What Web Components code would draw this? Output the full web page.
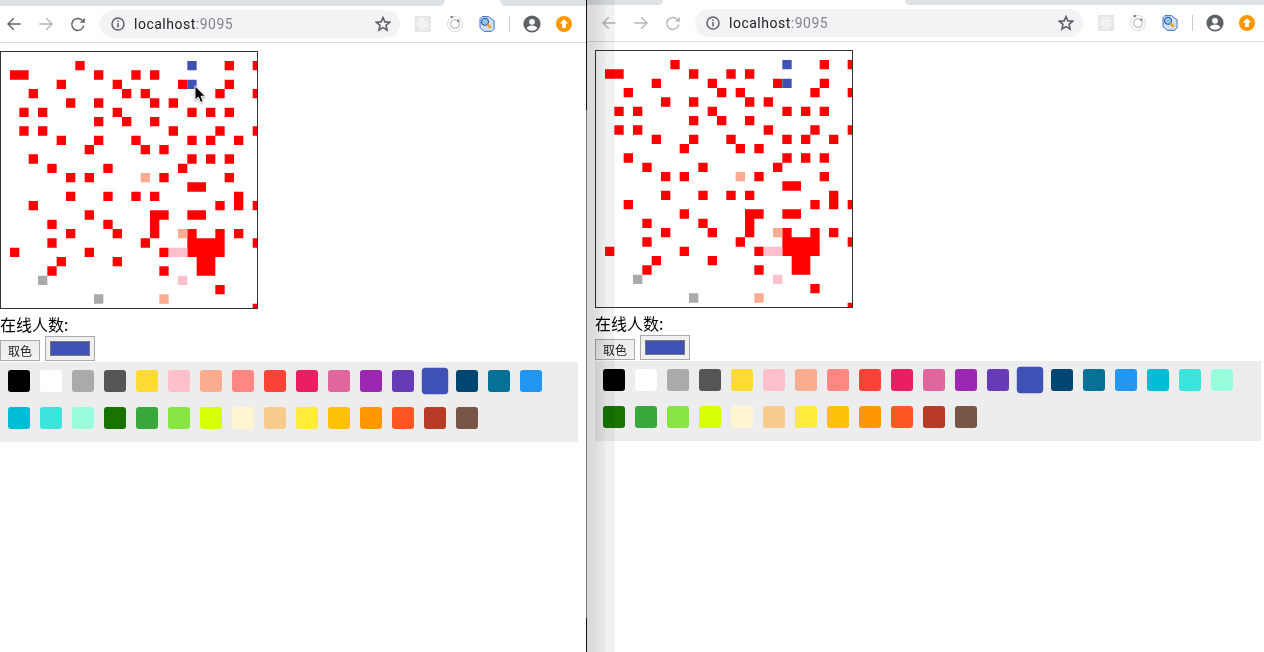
<!DOCTYPE html>
<html>
<head>
<meta charset="utf-8">
<title>pixel board</title>
<style>
  html, body { margin: 0; height: 100%; background: #fff; overflow: hidden; }
  body { display: flex; font-family: "Noto Sans CJK SC", "Liberation Sans", sans-serif; font-size: 16px; color: #000; }
</style>
</head>
<body>
<browser-window id="left" tab-before="445" tab-width="55" style="--strip:6px;--pad-l:0px;--pad-r:8px;--fwd:#b4b7bb;--back:#5f6368;--reload:#5f6368;width:586px;--line:#000">
  <paint-app style="--left:0px;--right:8px">
    <mouse-cursor slot="cursor"></mouse-cursor>
  </paint-app>
</browser-window>
<window-seam></window-seam>
<browser-window id="right" tab-before="76" tab-width="242" style="--strip:5px;--pad-l:8px;--pad-r:3px;--fwd:#b4b7bb;--back:#b4b7bb;--reload:#b4b7bb;flex:1">
  <paint-app style="--left:8px;--right:3px"></paint-app>
  <seam-shade></seam-shade>
</browser-window>

<script>
// toolbar icons, all drawn by hand on a 16 box
const icons = {
  back: `<svg width="16" height="16" viewBox="0 0 16 16" fill="none" stroke="currentColor" stroke-width="1.4"><path d="M14.7 8H2M7.800 2.200 2 8l5.800 5.800"/></svg>`,
  forward: `<svg width="16" height="16" viewBox="0 0 16 16" fill="none" stroke="currentColor" stroke-width="1.4"><path d="M1.300 8H14M8.200 2.200 14 8l-5.800 5.800"/></svg>`,
  reload: `<svg width="16" height="16" viewBox="0 0 16 16" fill="none" stroke="currentColor" stroke-width="1.5"><path d="M13.700 9.600a6 6 0 1 1-1.600-5.400"/><path d="M14.800 1.800v5h-5z" fill="currentColor" stroke="none"/></svg>`,
  info: `<svg width="16" height="16" viewBox="0 0 16 16" fill="none" stroke="#5f6368" stroke-width="1.500"><circle cx="8" cy="8" r="6"/><path d="M8 7v4.400M8 4.400v1.500"/></svg>`,
  star: `<svg width="16" height="16" viewBox="0 0 16 16" fill="none" stroke="#5f6368" stroke-width="1.600"><path d="M8 1.600l1.900 4.300 4.700.4-3.600 3.100 1.100 4.600L8 11.600 3.900 14l1.100-4.600-3.600-3.100 4.700-.4z"/></svg>`,
  atom: `<svg width="16" height="16" viewBox="0 0 16 16"><rect width="16" height="16" fill="#e6e6e6"/><g fill="none" stroke="#f8f8f8"><ellipse cx="8" cy="8" rx="6.500" ry="2.600"/><ellipse cx="8" cy="8" rx="6.500" ry="2.600" transform="rotate(60 8 8)"/><ellipse cx="8" cy="8" rx="6.500" ry="2.600" transform="rotate(120 8 8)"/></g><circle cx="8" cy="8" r="1.400" fill="#f8f8f8"/></svg>`,
  target: `<svg width="16" height="16" viewBox="0 0 16 16" fill="none" stroke="#d8d8d8"><circle cx="8" cy="8" r="7.500"/><circle cx="8" cy="8" r="4.400" stroke="#cccccc" stroke-width="1.800"/><circle cx="4.700" cy="1" r="1.300" fill="#808080" stroke="none"/><circle cx="11.300" cy="4.700" r="1.200" fill="#808080" stroke="none"/></svg>`,
  lens: `<svg width="16" height="16" viewBox="0 0 16 16"><path d="M3 .6h6.500l5.600 4.200v7.800l-2.500 2.800H5.400L1 11.600V2.600z" fill="#cfe0f7" stroke="#2f63c4" stroke-width=".9"/><circle cx="6" cy="5.800" r="3.600" fill="#8fc6f0" stroke="#1f4aa0"/><path d="M8.400 8.200l3.400 3.600" stroke="#f0a018" stroke-width="2.600"/></svg>`,
  avatar: `<svg width="18" height="18" viewBox="0 0 18 18"><circle cx="9" cy="9" r="8.600" fill="#5f6368"/><circle cx="9" cy="6.800" r="2.900" fill="#fff"/><path d="M3.600 13.200c1-2 3.200-2.800 5.400-2.800s4.400.8 5.400 2.800A6.800 6.800 0 0 1 9 15.800a6.800 6.800 0 0 1-5.400-2.600z" fill="#fff"/></svg>`,
  update: `<svg width="16" height="16" viewBox="0 0 16 16"><circle cx="8" cy="8" r="8" fill="#ff9800"/><path d="M8 3.200l4.200 4.400H9.900V12H6.100V7.600H3.800z" fill="#fff"/></svg>`
};

class ToolbarIcon extends HTMLElement {
  constructor() {
    super();
    this.attachShadow({ mode: "open" }).innerHTML = `
      <style>
        :host { display: flex; width: 28px; height: 28px; flex: none; align-items: center; justify-content: center; }
        svg { display: block; }
      </style>
      ${icons[this.getAttribute("name")]}`;
  }
}
customElements.define("toolbar-icon", ToolbarIcon);

const chromeCss = `
  :host { display: flex; flex-direction: column; position: relative; flex: none; min-width: 0; height: 652px; overflow: hidden; }
  .strip { display: flex; flex: none; height: var(--strip); background: #fff; }
  .strip i { display: block; background: #dee1e6; }
  .strip i:first-child { border-bottom-right-radius: 6px; }
  .strip i:last-child { flex: 1; border-bottom-left-radius: 6px; }
  .bar {
    display: flex; align-items: center; flex: none; height: 36px; box-sizing: content-box;
    padding: 0 var(--pad-r) 0 var(--pad-l); border-bottom: 1px solid #dadce0; background: #fff;
  }
  .nav { display: flex; gap: 4px; flex: none; margin-right: 8px; }
  .omni {
    display: flex; align-items: center; flex: 1; min-width: 0; height: 28px; border-radius: 14px;
    background: #f1f3f4; padding: 0 9px 0 10px; margin-right: 9px;
    font: 14px/28px Roboto, "Liberation Sans", sans-serif; color: #202124; letter-spacing: .5px;
  }
  .omni span { flex: 1; margin-left: 8px; white-space: nowrap; }
  .omni em { font-style: normal; color: #80868b; }
  .omni svg { display: block; flex: none; }
  .ext { display: flex; gap: 4px; flex: none; }
  .sep { flex: none; width: 1px; height: 16px; margin: 0 8px; background: #c8cacd; }
  .page { flex: 1; min-height: 0; }
`;

class BrowserWindow extends HTMLElement {
  constructor() {
    super();
    const before = this.getAttribute("tab-before");
    const tab = this.getAttribute("tab-width");
    this.attachShadow({ mode: "open" }).innerHTML = `
      <style>${chromeCss}</style>
      <div class="strip"><i style="width:${before}px"></i><b style="width:${tab}px"></b><i></i></div>
      <div class="bar">
        <div class="nav">
          <toolbar-icon name="back" style="color:var(--back)"></toolbar-icon>
          <toolbar-icon name="forward" style="color:var(--fwd)"></toolbar-icon>
          <toolbar-icon name="reload" style="color:var(--reload)"></toolbar-icon>
        </div>
        <div class="omni">${icons.info}<span>localhost<em>:9095</em></span>${icons.star}</div>
        <div class="ext">
          <toolbar-icon name="atom"></toolbar-icon>
          <toolbar-icon name="target"></toolbar-icon>
          <toolbar-icon name="lens"></toolbar-icon>
        </div>
        <div class="sep"></div>
        <div class="ext">
          <toolbar-icon name="avatar"></toolbar-icon>
          <toolbar-icon name="update"></toolbar-icon>
        </div>
      </div>
      <div class="page"><slot></slot></div>`;
  }
}
customElements.define("browser-window", BrowserWindow);

// the thin line between the two windows, black at both ends and grey in the middle
class WindowSeam extends HTMLElement {
  constructor() {
    super();
    this.attachShadow({ mode: "open" }).innerHTML = `
      <style>
        :host {
          display: block; flex: none; width: 1px; height: 652px;
          background: linear-gradient(#111 0 110px, #777 110px 618px, #111 618px);
        }
      </style>`;
  }
}
customElements.define("window-seam", WindowSeam);

// grey fade left over on the edge of the right window, lies over its content
class SeamShade extends HTMLElement {
  constructor() {
    super();
    this.attachShadow({ mode: "open" }).innerHTML = `
      <style>
        :host {
          display: block; position: absolute; left: 0; top: 0; width: 28px; height: 100%;
          pointer-events: none; mix-blend-mode: multiply;
          background: linear-gradient(90deg, #d9d9d9 0, #dedede 9px, #e4e4e4 13px, #ebebeb 18px, #f0f1f1 20px, #f0f1f1 27px, #fff 28px);
        }
      </style>`;
  }
}
customElements.define("seam-shade", SeamShade);

// row: [red cols], other colours are listed in extras below
const reds = {
  1: [8, 24, 27], 2: [1, 2, 10, 14, 16], 3: [6, 12, 19, 24], 4: [3, 13, 15, 23, 27], 5: [7, 10, 16, 18],
  6: [2, 4, 12, 20, 22, 24], 7: [10, 13, 16], 8: [2, 4, 18, 23, 27], 9: [6, 10, 14, 20, 22, 25], 10: [9, 15, 17],
  11: [3, 20, 22, 24], 12: [5, 11, 19], 13: [7, 9, 17, 24], 14: [20, 21], 15: [7, 11, 14, 16, 25],
  16: [3, 23, 25, 27], 17: [9, 16, 17, 20, 21], 18: [5, 11, 16], 19: [7, 12, 16, 20, 23, 25],
  20: [5, 15, 20, 21, 22, 23, 27], 21: [1, 9, 17, 20, 21, 22, 23], 22: [6, 12, 21, 22], 23: [5, 17, 21, 22],
  25: [23], 27: [27]
};
const extras = {
  "#3f51b5": [[1, 20], [3, 20]],
  "#ffab91": [[13, 15], [19, 19], [26, 17]],
  "#ffc0cb": [[21, 18], [21, 19], [24, 19]],
  "#aaaaaa": [[24, 4], [26, 10]]
};
const CELL = 28 / 3;
const OFFSET = -1 / 3; // cells sit a third of a pixel up and left of the board box
const cell = ([row, col]) => {
  const x = (col * CELL + OFFSET).toFixed(2);
  const y = (row * CELL + OFFSET).toFixed(2);
  const s = CELL.toFixed(2);
  return `M${x} ${y}h${s}v${s}h-${s}z`;
};

class PixelBoard extends HTMLElement {
  constructor() {
    super();
    // one path per colour, so that touching cells have no seam between them
    const red = [];
    Object.keys(reds).forEach(row => reds[row].forEach(col => red.push([+row, col])));
    let paths = `<path fill="#f00" d="${red.map(cell).join("")}"/>`;
    Object.keys(extras).forEach(fill => {
      paths += `<path fill="${fill}" d="${extras[fill].map(cell).join("")}"/>`;
    });
    this.attachShadow({ mode: "open" }).innerHTML = `
      <style>
        :host { display: block; position: relative; width: 256px; height: 256px; border: 1px solid #333; background: #fff; }
        svg { display: block; }
      </style>
      <svg width="256" height="256" viewBox="0 0 256 256">${paths}</svg>
      <slot></slot>`;
  }
}
customElements.define("pixel-board", PixelBoard);

class MouseCursor extends HTMLElement {
  constructor() {
    super();
    this.attachShadow({ mode: "open" }).innerHTML = `
      <style>
        :host { display: block; position: absolute; left: 193px; top: 33px; width: 12px; height: 19px; }
        svg { display: block; overflow: visible; filter: drop-shadow(0 1px 1px rgba(0,0,0,.35)); }
      </style>
      <svg width="12" height="19" viewBox="0 0 12 19"><path d="M1 .8v14.300l3.400-3 2.200 5.400 2.600-1.100-2.200-5.200h4.500z" fill="#000" stroke="#fff" stroke-width="1"/></svg>`;
  }
}
customElements.define("mouse-cursor", MouseCursor);

const palette = [
  "#000000", "#ffffff", "#aaaaaa", "#555555", "#fddb33", "#ffc0cb", "#faac8e", "#ff8781",
  "#f94336", "#e91e63", "#e2669e", "#9c27b0", "#673ab7", "#3f51b5", "#004670", "#057197",
  "#2196f3", "#00bcd4", "#3be5db", "#97fddc", "#167300", "#37a93c", "#89e642", "#d7ff07",
  "#fff6d1", "#f8cb8c", "#ffeb3b", "#ffc107", "#ff9800", "#ff5722", "#b83b26", "#795548"
];

class SwatchPalette extends HTMLElement {
  constructor() {
    super();
    const selected = this.getAttribute("selected");
    const items = palette.map(c =>
      `<span class="${c === selected ? "on" : ""}" style="background:${c}"></span>`).join("");
    this.attachShadow({ mode: "open" }).innerHTML = `
      <style>
        :host { display: flex; flex-wrap: wrap; padding: 3px; background: #ededed; }
        span { display: block; width: 22px; height: 22px; margin: 5px 5px 10px; border-radius: 3px; }
        .on { transform: scale(1.2); }
      </style>
      ${items}`;
  }
}
customElements.define("swatch-palette", SwatchPalette);

class PaintApp extends HTMLElement {
  constructor() {
    super();
    this.attachShadow({ mode: "open" }).innerHTML = `
      <style>
        :host { display: block; padding: 8px var(--right) 0 var(--left); }
        .online { height: 27px; font-size: 16px; line-height: 30px; }
        .tools { display: flex; align-items: flex-end; gap: 5px; height: 25px; margin-bottom: 1px; }
        button {
          width: 40px; height: 21px; padding: 0; box-sizing: border-box;
          border: 1px solid #aaa; border-radius: 0; background: linear-gradient(#ececec, #f4f4f4);
          font: 12px/19px "Noto Sans CJK SC", sans-serif; color: #222;
        }
        input {
          display: block; width: 50px; height: 25px; padding: 4px 4px 4px; box-sizing: border-box; margin: 0;
          border: 1px solid #aaa; border-radius: 0; background: #f0f0f0;
        }
        input::-webkit-color-swatch-wrapper { padding: 0; }
        input::-webkit-color-swatch { border: 1px solid #777; border-radius: 0; }
      </style>
      <pixel-board><slot name="cursor"></slot></pixel-board>
      <div class="online">在线人数:</div>
      <div class="tools">
        <button type="button">取色</button>
        <input type="color" value="#3f51b5">
      </div>
      <swatch-palette selected="#3f51b5"></swatch-palette>`;
  }
}
customElements.define("paint-app", PaintApp);
</script>
</body>
</html>
